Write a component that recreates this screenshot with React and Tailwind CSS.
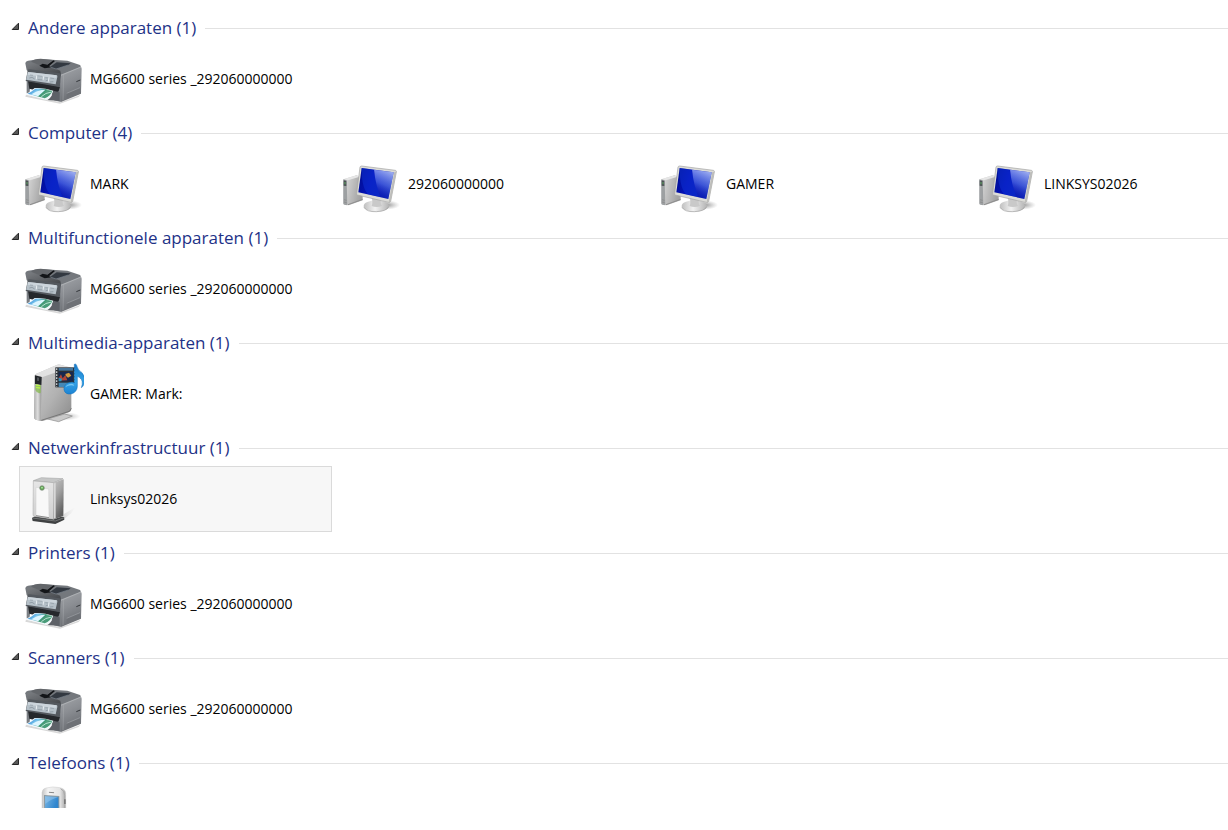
const groups = [
    { title: "Andere apparaten", items: [{ name: "MG6600 series _292060000000", Icon: PrinterIcon }] },
    {
        title: "Computer",
        items: [
            { name: "MARK", Icon: ComputerIcon },
            { name: "292060000000", Icon: ComputerIcon },
            { name: "GAMER", Icon: ComputerIcon },
            { name: "LINKSYS02026", Icon: ComputerIcon },
        ],
    },
    { title: "Multifunctionele apparaten", items: [{ name: "MG6600 series _292060000000", Icon: PrinterIcon }] },
    { title: "Multimedia-apparaten", items: [{ name: "GAMER: Mark:", Icon: MediaIcon }] },
    { title: "Netwerkinfrastructuur", items: [{ name: "Linksys02026", Icon: RouterIcon, selected: true }] },
    { title: "Printers", items: [{ name: "MG6600 series _292060000000", Icon: PrinterIcon }] },
    { title: "Scanners", items: [{ name: "MG6600 series _292060000000", Icon: PrinterIcon }] },
    { title: "Telefoons", items: [{ name: "", label: "Telefoon", Icon: PhoneIcon }], cut: true },
]

function PrinterIcon() {
    return (
        <svg className="size-16 shrink-0" viewBox="8 -9 192 192" aria-hidden="true">
            <defs>
                <linearGradient id="pr-side" x1="0" y1="0" x2="0.3" y2="1">
                    <stop offset="0" stopColor="#a3a6aa" />
                    <stop offset="0.5" stopColor="#8b8e93" />
                    <stop offset="1" stopColor="#6b6e73" />
                </linearGradient>
                <linearGradient id="pr-top" x1="0" y1="0" x2="1" y2="1">
                    <stop offset="0" stopColor="#7d8084" />
                    <stop offset="1" stopColor="#404347" />
                </linearGradient>
                <linearGradient id="pr-photo" x1="0" y1="0" x2="1" y2="0.4">
                    <stop offset="0" stopColor="#1d74c9" />
                    <stop offset="0.4" stopColor="#7cc6ee" />
                    <stop offset="0.7" stopColor="#3c9570" />
                    <stop offset="1" stopColor="#c9ecdf" />
                </linearGradient>
            </defs>
            <path d="M26 134 L130 157 L190 134 L184 141 L128 161 L24 140 Z" fill="#d8d8d8" />
            <path d="M130 70 L187 48 Q193 50 193 56 L191 131 L131 156 L124 150 Z" fill="url(#pr-side)" />
            <path d="M28 92 L130 104 L130 156 L110 151 L104 126 L38 116 L36 136 L28 130 Z" fill="#7a7e83" />
            <path d="M32 92 L128 110 L124 124 L104 134 L36 116 Z" fill="#25282c" />
            <path d="M24 40 Q24 34 32 32 L68 27 L150 32 L188 45 Q193 49 188 51 L133 73 L28 61 Z" fill="#74787d" />
            <path d="M30 40 L62 35 L129 62 L131 76 L30 64 Z" fill="url(#pr-top)" />
            <path d="M41 35 Q50 26 70 26 L107 30 L88 44 L71 47 Z" fill="#63666a" />
            <path d="M66 47 L76 41 L90 44 L108 31 L113 33 L95 49 L104 52 L82 55 Z" fill="#131518" />
            <path d="M98 51 L118 37 L160 40 L152 46 L116 57 Z" fill="#333941" />
            <path d="M99 51 L116 57 L153 45" fill="none" stroke="#7b858f" strokeWidth="2" />
            <path d="M31 62 Q31 57 38 58 L127 70 Q132 71 131 76 L128 107 Q126 111 121 110 L25 93 Z" fill="#54595f" />
            <path d="M32 66 L118 76 Q121 77 120 81 L115 103 L26 89 Z" fill="#b5c0c8" />
            <path d="M32 66 L118 76 L117 84 L30 74 Z" fill="#ccd5dc" />
            <path d="M38 75 L47 76 M60 77 L75 79 M84 83 L92 84 M99 84 L110 86" stroke="#8d98a2" strokeWidth="2" />
            <path d="M36 84 L44 82 L52 87 M61 89 L78 90 M85 93 L92 90 M98 96 L108 95" fill="none" stroke="#7f8b95" strokeWidth="2" />
            <path d="M58 77 L57 88 M79 79 L77 91 M95 82 L93 95" stroke="#e6ecf0" strokeWidth="3" />
            <path d="M52 114 Q80 112 108 122 Q104 140 87 150 L24 133 Q38 126 52 114 Z" fill="#f2f8fb" />
            <path d="M54 116 Q80 114 105 123 Q100 138 82 145 L31 131 Q43 125 54 116 Z" fill="url(#pr-photo)" />
            <path d="M48 130 Q62 119 84 119 Q72 130 62 139 L42 133 Z" fill="#ddf5ff" />
            <path d="M67 139 Q78 123 100 122 L105 123 Q100 138 82 145 Z" fill="#4a9b79" />
            <path d="M72 140 Q84 128 103 126" fill="none" stroke="#b7e3d1" strokeWidth="3" />
            <path d="M108 122 L127 127 L127 153 L91 150 Q105 140 108 122 Z" fill="#5d6167" />
            <path d="M131 76 L191 51" stroke="#b9bcbf" strokeWidth="2" />
            <path d="M139 73 L137 151" stroke="#aaadb1" strokeWidth="2" opacity="0.7" />
            <path d="M148 130 L188 113 L187 130 L148 145 Z" fill="#6e7176" />
            <path d="M148 130 L188 113" stroke="#a0a3a7" strokeWidth="2" />
            <path d="M177 95 L189 90" stroke="#34373b" strokeWidth="3" />
        </svg>
    )
}

function ComputerIcon() {
    return (
        <svg className="size-16 shrink-0" viewBox="6 -24 192 192" aria-hidden="true">
            <defs>
                <linearGradient id="pc-tower" x1="0" y1="0" x2="1" y2="0.3">
                    <stop offset="0" stopColor="#dedede" />
                    <stop offset="1" stopColor="#a2a2a2" />
                </linearGradient>
                <linearGradient id="pc-screen" x1="0" y1="0" x2="1" y2="0.3">
                    <stop offset="0" stopColor="#000e8c" />
                    <stop offset="0.45" stopColor="#0412b8" />
                    <stop offset="1" stopColor="#0b1fae" />
                </linearGradient>
                <linearGradient id="pc-shine" x1="0.8" y1="0" x2="0.5" y2="1">
                    <stop offset="0" stopColor="#c3d2ff" stopOpacity="0.85" />
                    <stop offset="0.55" stopColor="#5f7cf0" stopOpacity="0.6" />
                    <stop offset="1" stopColor="#1020c8" stopOpacity="0.1" />
                </linearGradient>
                <linearGradient id="pc-base">
                    <stop offset="0" stopColor="#bfbfbf" />
                    <stop offset="0.45" stopColor="#f2f2f2" />
                    <stop offset="1" stopColor="#b4b4b4" />
                </linearGradient>
                <radialGradient id="pc-shadow">
                    <stop offset="0" stopColor="#777" stopOpacity="0.75" />
                    <stop offset="1" stopColor="#999" stopOpacity="0" />
                </radialGradient>
            </defs>
            <ellipse cx="154" cy="135" rx="38" ry="14" fill="url(#pc-shadow)" />
            <path d="M22 58 L62 46 L80 56 L80 121 L38 136 L22 133 Z" fill="url(#pc-tower)" />
            <path d="M22 58 L62 46 L71 50 L36 61 Z" fill="#e6e6e6" />
            <path d="M22 58 L32 61 L34 136 L25 134 Q22 133 22 129 Z" fill="#9da0a2" />
            <path d="M23 61 L31 63 L31 78 L23 77 Z" fill="#4b5054" />
            <path d="M27 66 L27 73" stroke="#6bd36b" strokeWidth="2" />
            <path d="M24 119 L32 121 M24 126 L32 128" stroke="#858585" strokeWidth="2" />
            <path d="M36 134 L80 118" stroke="#8e8e8e" strokeWidth="3" />
            <ellipse cx="121" cy="138" rx="38" ry="17" fill="url(#pc-base)" />
            <path d="M84 142 Q92 156 121 155 Q152 154 158 140" fill="none" stroke="#9c9c9c" strokeWidth="2" />
            <path d="M105 109 L135 114 Q132 130 138 138 Q122 144 107 138 Q112 124 105 109 Z" fill="#c9c9c9" />
            <path d="M72 21 Q73 18 77 18 L178 31 Q182 32 181 36 L164 124 Q163 128 158 127 L64 105 Q61 104 62 100 Z" fill="#dcdcd8" stroke="#a3a3a3" strokeWidth="2" />
            <path d="M181 36 L164 124 Q163 128 158 127 L175 36 Z" fill="#bdbdba" />
            <path d="M77 24 L173 37 L157 117 L67 97 Z" fill="url(#pc-screen)" />
            <path d="M77 24 L113 29 Q118 66 133 111 L96 103 Q76 82 77 24 Z" fill="#1038dc" opacity="0.45" />
            <path d="M114 29 L173 37 L157 117 L134 112 Q118 73 114 29 Z" fill="url(#pc-shine)" />
        </svg>
    )
}

function MediaIcon() {
    return (
        <svg className="size-16 shrink-0" viewBox="6 21 192 192" aria-hidden="true">
            <defs>
                <linearGradient id="md-body" x1="0" y1="0" x2="1" y2="1">
                    <stop offset="0" stopColor="#cfcfcf" />
                    <stop offset="0.55" stopColor="#b2b2b2" />
                    <stop offset="1" stopColor="#8a8a8a" />
                </linearGradient>
                <linearGradient id="md-front">
                    <stop offset="0" stopColor="#b0b0b0" />
                    <stop offset="0.5" stopColor="#dedede" />
                    <stop offset="1" stopColor="#929292" />
                </linearGradient>
                <linearGradient id="md-note" x1="0" y1="0" x2="0" y2="1">
                    <stop offset="0" stopColor="#1779c7" />
                    <stop offset="0.6" stopColor="#35a3e8" />
                    <stop offset="1" stopColor="#1c83d3" />
                </linearGradient>
                <radialGradient id="md-shadow">
                    <stop offset="0" stopColor="#555" stopOpacity="0.6" />
                    <stop offset="1" stopColor="#999" stopOpacity="0" />
                </radialGradient>
            </defs>
            <ellipse cx="134" cy="184" rx="54" ry="13" fill="url(#md-shadow)" />
            <path d="M88 192 L122 200 L163 183 L140 177 Z" fill="#c9c9c9" stroke="#8c8c8c" strokeWidth="2" />
            <path d="M50 62 Q50 58 55 56 L118 29 Q124 27 130 30 L160 39 L160 163 Q160 169 154 171 L77 197 Q70 199 66 197 L53 194 Q48 192 48 187 Z" fill="url(#md-body)" />
            <path d="M50 62 Q50 57 55 56 L118 29 Q124 27 130 30 L157 37 L72 67 Z" fill="#e2e2e2" />
            <path d="M50 61 L71 66 L68 198 L53 194 Q48 192 48 187 Z" fill="url(#md-front)" />
            <path d="M51 61 L71 66 L70 90 L51 87 Z" fill="#23262a" />
            <path d="M58 67 L62 68 L62 78 L58 77 Z" fill="#686d72" />
            <path d="M52 89 L69 91 L68 114 Q58 118 52 105 Z" fill="#84b84c" opacity="0.75" />
            <path d="M54 90 L66 92 M54 97 L66 99" stroke="#b8f04a" strokeWidth="4" />
            <path d="M70 196 L154 169 L160 160" fill="none" stroke="#777" strokeWidth="3" />
            <path d="M112 37 L174 37 L174 97 L112 97 Z" fill="#2b3036" />
            <path d="M116 40 L116 95" stroke="#c4c8cb" strokeWidth="4" strokeDasharray="5 4" />
            <path d="M170 40 L170 95" stroke="#c4c8cb" strokeWidth="3" strokeDasharray="5 4" />
            <path d="M122 39 L165 39 L165 47 L122 47 Z" fill="#44759b" />
            <path d="M122 51 L165 51 L165 79 L122 79 Z" fill="#17284f" />
            <path d="M122 70 L129 58 L134 70 L142 60 L148 76 L122 77 Z" fill="#ae4436" />
            <path d="M142 57 L153 53 L160 62 L150 68 L144 63 Z" fill="#d39b3f" />
            <path d="M122 68 L132 71 L130 79 L122 79 Z" fill="#2d94bc" />
            <path d="M122 83 L165 83 L165 96 L122 96 Z" fill="#4587b5" />
            <path d="M169 28 Q171 25 175 29 Q179 46 192 53 Q204 67 198 87 Q195 96 190 98 Q198 77 184 67 L178 64 L178 95 Q177 112 159 117 Q141 119 138 104 Q136 89 153 83 Q163 80 169 83 Z" fill="url(#md-note)" stroke="#116fb9" strokeWidth="1.5" />
            <path d="M142 97 Q147 86 162 86 Q168 87 169 92 Q153 88 142 97 Z" fill="#a7e2ff" opacity="0.6" />
        </svg>
    )
}

function RouterIcon() {
    return (
        <svg className="size-16 shrink-0" viewBox="30 21 192 192" aria-hidden="true">
            <defs>
                <linearGradient id="rt-front" x1="0" y1="0" x2="0" y2="1">
                    <stop offset="0" stopColor="#e6e6e6" />
                    <stop offset="1" stopColor="#cfcfcf" />
                </linearGradient>
                <linearGradient id="rt-side" x1="0" y1="0" x2="0.4" y2="1">
                    <stop offset="0" stopColor="#c4c4c4" />
                    <stop offset="0.45" stopColor="#a2a2a2" />
                    <stop offset="1" stopColor="#5e5e5e" />
                </linearGradient>
                <linearGradient id="rt-shadow">
                    <stop offset="0" stopColor="#8f8f8f" stopOpacity="0.6" />
                    <stop offset="1" stopColor="#cccccc" stopOpacity="0" />
                </linearGradient>
            </defs>
            <path d="M136 189 L158 164 L196 142 L184 160 L156 182 Z" fill="url(#rt-shadow)" />
            <path d="M66 174 L82 164 L162 171 L163 179 L136 192 L68 183 Z" fill="#3f4142" />
            <path d="M67 174 L136 183 L163 173" fill="none" stroke="#8d9090" strokeWidth="2" />
            <path d="M70 62 L94 53 L158 56 Q162 57 162 61 L160 168 L132 178 L72 169 Z" fill="#e9e9e9" />
            <path d="M70 62 L94 53 L159 56 L131 68 Z" fill="#c6c7c7" stroke="#9a9c9c" strokeWidth="1.5" />
            <path d="M70 63 L131 68 L131 178 L72 169 Q69 168 69 164 Z" fill="url(#rt-front)" stroke="#a7a7a7" strokeWidth="1.5" />
            <path d="M131 68 L161 58 L160 168 L131 178 Z" fill="url(#rt-side)" />
            <path d="M132 70 L137 69 L137 174 L132 176 Z" fill="#d8d8d8" />
            <path d="M78 82 L116 87 L117 173 L78 167 Z" fill="#f8f8f8" stroke="#cfcfcf" strokeWidth="1.5" />
            <path d="M78 167 L117 173" stroke="#8b8b8b" strokeWidth="3" />
            <circle cx="96" cy="84" r="7" fill="#5fa14f" stroke="#7b867b" strokeWidth="2" />
            <circle cx="96" cy="83" r="2.5" fill="#b0edab" />
        </svg>
    )
}

function PhoneIcon() {
    return (
        <svg className="size-16 shrink-0" viewBox="60 124 192 192" aria-hidden="true">
            <defs>
                <linearGradient id="ph-body">
                    <stop offset="0" stopColor="#c3c3c3" />
                    <stop offset="0.25" stopColor="#f4f4f4" />
                    <stop offset="0.75" stopColor="#e4e4e4" />
                    <stop offset="1" stopColor="#a4a4a4" />
                </linearGradient>
                <linearGradient id="ph-screen" x1="0" y1="0" x2="1" y2="1">
                    <stop offset="0" stopColor="#78b5e3" />
                    <stop offset="0.5" stopColor="#3187cf" />
                    <stop offset="1" stopColor="#2378c1" />
                </linearGradient>
            </defs>
            <path d="M126 156 Q127 144 138 142 Q158 136 180 141 Q196 145 197 157 L198 300 L126 300 Z" fill="url(#ph-body)" stroke="#cccccc" strokeWidth="1.5" />
            <path d="M182 144 Q194 150 194 164 L194 300" fill="none" stroke="#a8a8a8" strokeWidth="3" />
            <path d="M192 176 L197 176 L197 190 L192 190 Z" fill="#777" />
            <path d="M148 155 L161 156" stroke="#888" strokeWidth="3" strokeLinecap="round" />
            <path d="M132 163 L178 166 L179 280 L133 280 Z" fill="#8b989f" />
            <path d="M135 167 L175 169 L176 280 L136 280 Z" fill="url(#ph-screen)" />
            <path d="M135 167 L175 169 Q150 177 136 190 Z" fill="#9bcaed" opacity="0.5" />
        </svg>
    )
}

function GroupHeader({ title, count }) {
    return (
        <h2 className="flex h-[37px] items-center gap-[9px] pt-px pl-[11px]">
            <button type="button" aria-expanded="true" className="flex items-center gap-2 whitespace-nowrap text-[17px] leading-6 text-[#1e3287]">
                <svg className="h-3 w-[9px]" viewBox="0 0 9 12" aria-hidden="true">
                    <path d="M7.5 1.2 V7.5 H1.2 Z" fill="#595959" stroke="#262626" />
                </svg>
                {title} ({count})
            </button>
            <span className="h-px grow bg-[#e2e2e2]"></span>
        </h2>
    )
}

function Device({ name, label, Icon, selected }) {
    return (
        <li className="w-[313px] shrink-0">
            <button
                type="button"
                aria-label={label}
                className={`flex w-full items-center gap-[6px] border text-left text-[14px] leading-5 text-black ${selected ? "border-[#dadada] bg-[#f7f7f7]" : "border-transparent"}`}
            >
                <Icon />
                {name}
            </button>
        </li>
    )
}

function App() {
    return (
        <main className="overflow-hidden bg-white pt-[9px] font-['Open_Sans','Noto_Sans',sans-serif]">
            {groups.map((group) => (
                <section key={group.title}>
                    <GroupHeader title={group.title} count={group.items.length} />
                    <ul className={`flex gap-[5px] overflow-hidden pl-[19px] ${group.cut ? "h-[27px]" : "mb-[2px]"}`}>
                        {group.items.map((item) => (
                            <Device key={item.name} {...item} />
                        ))}
                    </ul>
                </section>
            ))}
        </main>
    )
}

export default App
